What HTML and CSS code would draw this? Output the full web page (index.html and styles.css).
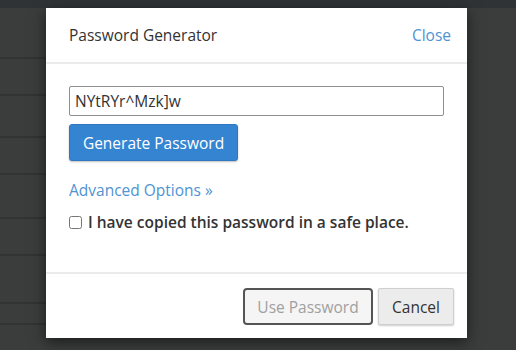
FILE: index.html
```html
<!DOCTYPE html>
<html>
<head>
<meta charset="utf-8">
<link rel="stylesheet" href="styles.css">
</head>
<body>
<div class="topbar"></div>
<div class="page">
  <div class="rows">
    <div class="row r1"></div>
    <div class="row r2"></div>
    <div class="row r3"></div>
    <div class="row r4"></div>
    <div class="row r5"></div>
    <div class="row r6"></div>
    <div class="row r7"></div>
    <div class="row r8"></div>
  </div>
</div>
<div class="modal">
  <div class="modal-header">
    <span class="title">Password Generator</span>
    <a class="close">Close</a>
  </div>
  <div class="modal-body">
    <input class="pw" type="text" value="NYtRYr^Mzk]w">
    <button class="btn-primary">Generate Password</button>
    <a class="advanced">Advanced Options »</a>
    <label class="confirm"><input type="checkbox" class="cb"><span>I have copied this password in a safe place.</span></label>
  </div>
  <div class="modal-footer">
    <button class="btn-use">Use Password</button>
    <button class="btn-cancel">Cancel</button>
  </div>
</div>
</body>
</html>
```
FILE: styles.css
```css
html, body {
  margin: 0;
  padding: 0;
  height: 100%;
}
body {
  background: #3b3c3c;
  font-family: "Open Sans", "Noto Sans", sans-serif;
  overflow: hidden;
  position: relative;
}
.topbar {
  height: 8px;
  background: #303336;
}
.page {
  display: flex;
}
.rows {
  width: 60px;
  display: flex;
  flex-direction: column;
}
.row {
  border-bottom: 2px solid #323333;
  box-sizing: border-box;
}
.r1 { height: 51px; }
.r2 { height: 37px; }
.r3 { height: 42px; }
.r4 { height: 37px; }
.r5 { height: 44px; }
.r6 { height: 37px; }
.r7 { height: 48px; }
.r8 { height: 21px; }

.modal {
  position: absolute;
  left: 46px;
  top: 8px;
  width: 421px;
  height: 330px;
  background: #fff;
  box-shadow: 0 4px 14px rgba(0, 0, 0, 0.55);
  display: flex;
  flex-direction: column;
}
.modal-header {
  height: 54px;
  flex: none;
  border-bottom: 2px solid #ebebeb;
  display: flex;
  align-items: center;
  justify-content: space-between;
  padding: 0 16px 0 23px;
}
.title {
  font-size: 15.5px;
  color: #333;
}
.close {
  font-size: 15.5px;
  color: #4f93d3;
}
.modal-body {
  padding: 22px 23px 0 23px;
  display: flex;
  flex-direction: column;
  align-items: flex-start;
  height: 208px;
  flex: none;
  box-sizing: border-box;
}
.pw {
  width: 375px;
  height: 30px;
  box-sizing: border-box;
  border: 1px solid #8f8f8f;
  border-radius: 2px;
  padding: 0 5px;
  font-family: "Open Sans", sans-serif;
  font-size: 15.5px;
  color: #333;
  margin: 0;
}
.btn-primary {
  margin-top: 8px;
  width: 169px;
  height: 37px;
  background: #3584d2;
  border: 1px solid #2f77c0;
  border-radius: 3px;
  color: #fff;
  font-family: "Open Sans", sans-serif;
  font-size: 15.5px;
  box-shadow: 0 1px 2px rgba(0, 0, 0, 0.25);
  padding: 0;
}
.advanced {
  margin-top: 19px;
  font-size: 15.5px;
  line-height: 20px;
  color: #4f93d3;
}
.confirm {
  margin-top: 12px;
  display: flex;
  align-items: center;
  font-size: 15.5px;
  font-weight: 600;
  color: #333;
  line-height: 20px;
}
.cb {
  margin: 0 6px 0 0;
  width: 13px;
  height: 13px;
}
.modal-footer {
  border-top: 2px solid #ebebeb;
  flex: 1;
  display: flex;
  justify-content: flex-end;
  align-items: flex-start;
  padding: 14px 13px 0 0;
  gap: 5px;
}
.btn-use {
  width: 130px;
  height: 37px;
  background: #f5f5f5;
  border: 2px solid #555;
  border-radius: 4px;
  color: #a0a0a0;
  font-family: "Open Sans", sans-serif;
  font-size: 15.5px;
  padding: 0;
}
.btn-cancel {
  width: 76px;
  height: 37px;
  background: #ececec;
  border: 1px solid #cfcfcf;
  border-radius: 2px;
  color: #333;
  font-family: "Open Sans", sans-serif;
  font-size: 15.5px;
  padding: 0;
  box-shadow: 0 1px 2px rgba(0, 0, 0, 0.2);
}
```
